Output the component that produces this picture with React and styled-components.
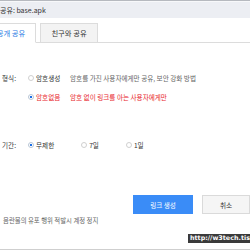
import React from 'react';
import styled, { createGlobalStyle } from 'styled-components';

const GlobalStyle = createGlobalStyle`
  html, body {
    margin: 0;
    padding: 0;
    background: #ffffff;
    overflow: hidden;
  }
  body {
    font-family: 'Noto Sans CJK KR', 'Noto Sans', sans-serif;
  }
`;

const Dialog = styled.div`
  position: relative;
  width: 264px;
  height: 250px;
  margin-left: -14px;
  display: flex;
  flex-direction: column;
  box-sizing: border-box;
  border-top: 1px solid #b6b9bf;
  border-bottom: 1px solid #cfcfcf;
  background: #fff;
`;

const TitleBar = styled.div`
  height: 16px;
  display: flex;
  align-items: center;
  padding-left: 14px;
  background: #eceef3;
  border-top: 1px solid #f7f8fa;
  font-size: 7px;
  color: #333;
`;

const Tabs = styled.div`
  display: flex;
  align-items: flex-end;
  gap: 4px;
  margin-top: 5px;
  border-bottom: 1px solid #dcdcdc;
`;

const Tab = styled.div`
  height: ${(p) => (p.$active ? '20px' : '19px')};
  width: ${(p) => p.$width}px;
  display: flex;
  align-items: center;
  justify-content: center;
  box-sizing: border-box;
  border: 1px solid #dcdcdc;
  border-bottom: ${(p) => (p.$active ? '1px solid #fff' : 'none')};
  margin-bottom: ${(p) => (p.$active ? '-1px' : '0')};
  background: ${(p) => (p.$active ? '#fff' : '#f3f3f3')};
  color: ${(p) => (p.$active ? '#2b7be4' : '#333')};
  font-size: 7.3px;
`;

const Form = styled.div`
  display: flex;
  flex-direction: column;
  padding: 30px 0 0 16px;
`;

const Field = styled.div`
  display: grid;
  grid-template-columns: 26px 1fr;
  margin-top: ${(p) => p.$top || 0}px;
  font-size: 6.6px;
  color: #333;
`;

const Label = styled.div`
  line-height: 10px;
`;

const Options = styled.div`
  display: flex;
  flex-direction: ${(p) => (p.$row ? 'row' : 'column')};
  gap: ${(p) => (p.$row ? '27px' : '9px')};
`;

const Option = styled.div`
  display: flex;
  align-items: center;
  height: 10px;
  gap: 2px;
  color: ${(p) => (p.$danger ? '#e8242b' : '#333')};
`;

const Radio = styled.span`
  width: 6px;
  height: 6px;
  border-radius: 50%;
  box-sizing: border-box;
  border: 1px solid ${(p) => (p.$checked ? '#b9c6d6' : '#d0d0d0')};
  background: #fff;
  display: flex;
  align-items: center;
  justify-content: center;
  flex-shrink: 0;

  &::after {
    content: '';
    width: 2px;
    height: 2px;
    background: ${(p) => (p.$checked ? '#1a6fe6' : 'transparent')};
  }
`;

const OptName = styled.span`
  width: 32px;
`;

const Hint = styled.span`
  color: ${(p) => (p.$danger ? '#e8242b' : '#666')};
`;

const Footer = styled.div`
  margin-top: auto;
  display: flex;
  align-items: flex-start;
  padding: 0 0 24px 17px;
`;

const Notice = styled.div`
  font-size: 6.4px;
  color: #666;
  margin-top: 21px;
`;

const Buttons = styled.div`
  margin-left: auto;
  display: flex;
  gap: 9px;
`;

const Button = styled.div`
  height: 19px;
  width: ${(p) => p.$width}px;
  box-sizing: border-box;
  display: flex;
  align-items: center;
  justify-content: center;
  font-size: 6.6px;
  background: ${(p) => (p.$primary ? '#3a8cf7' : '#f5f5f5')};
  color: ${(p) => (p.$primary ? '#fff' : '#333')};
  border: 1px solid ${(p) => (p.$primary ? '#3a8cf7' : '#dadada')};
`;

const UrlTag = styled.div`
  position: absolute;
  right: 0;
  bottom: 6px;
  height: 9px;
  padding: 0 0 0 2px;
  background: #3a3a3a;
  color: #fff;
  font-family: 'DejaVu Sans', sans-serif;
  font-weight: bold;
  font-size: 6.4px;
  line-height: 9px;
  white-space: nowrap;
`;

export default function App() {
  return (
    <>
      <GlobalStyle />
      <Dialog>
        <TitleBar>공유: base.apk</TitleBar>
        <Tabs>
          <Tab $active $width={50}>공개 공유</Tab>
          <Tab $width={58}>친구와 공유</Tab>
        </Tabs>
        <Form>
          <Field>
            <Label>형식:</Label>
            <Options>
              <Option>
                <Radio />
                <OptName>암호생성</OptName>
                <Hint>암호를 가진 사용자에게만 공유, 보안 강화 방법</Hint>
              </Option>
              <Option $danger>
                <Radio $checked />
                <OptName>암호없음</OptName>
                <Hint $danger>암호 없이 링크를 아는 사용자에게만</Hint>
              </Option>
            </Options>
          </Field>
          <Field $top={38}>
            <Label>기간:</Label>
            <Options $row>
              <Option>
                <Radio $checked />
                <span>무제한</span>
              </Option>
              <Option>
                <Radio />
                <span>7일</span>
              </Option>
              <Option>
                <Radio />
                <span>1일</span>
              </Option>
            </Options>
          </Field>
        </Form>
        <Footer>
          <Notice>음란물의 유포 행위 적발시 계정 정지</Notice>
          <Buttons>
            <Button $primary $width={60}>링크 생성</Button>
            <Button $width={48}>취소</Button>
          </Buttons>
        </Footer>
        <UrlTag>http://w3tech.tis</UrlTag>
      </Dialog>
    </>
  );
}
